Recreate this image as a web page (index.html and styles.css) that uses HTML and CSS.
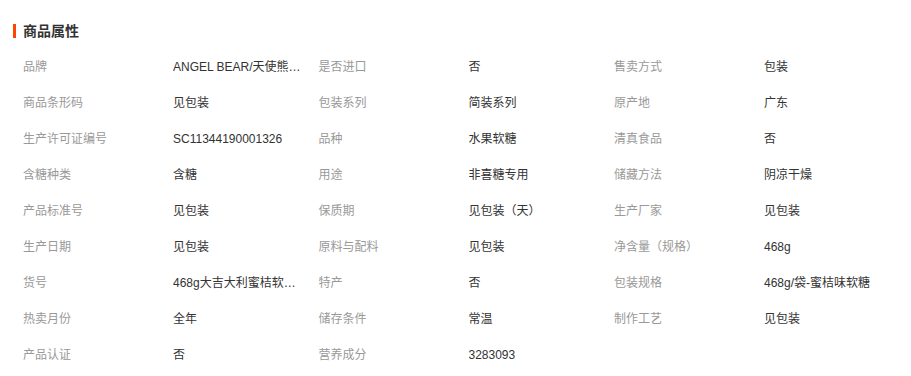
FILE: index.html
```html
<!DOCTYPE html>
<html lang="zh-CN">
<head>
<meta charset="utf-8">
<title>商品属性</title>
<link rel="stylesheet" href="styles.css">
</head>
<body>
<section class="attrs">
  <h2 class="attrs-title">商品属性</h2>
  <dl class="attrs-grid">
    <dt>品牌</dt><dd>ANGEL BEAR/天使熊食品</dd>
    <dt>是否进口</dt><dd>否</dd>
    <dt>售卖方式</dt><dd>包装</dd>

    <dt>商品条形码</dt><dd>见包装</dd>
    <dt>包装系列</dt><dd>简装系列</dd>
    <dt>原产地</dt><dd>广东</dd>

    <dt>生产许可证编号</dt><dd>SC11344190001326</dd>
    <dt>品种</dt><dd>水果软糖</dd>
    <dt>清真食品</dt><dd>否</dd>

    <dt>含糖种类</dt><dd>含糖</dd>
    <dt>用途</dt><dd>非喜糖专用</dd>
    <dt>储藏方法</dt><dd>阴凉干燥</dd>

    <dt>产品标准号</dt><dd>见包装</dd>
    <dt>保质期</dt><dd>见包装（天）</dd>
    <dt>生产厂家</dt><dd>见包装</dd>

    <dt>生产日期</dt><dd>见包装</dd>
    <dt>原料与配料</dt><dd>见包装</dd>
    <dt>净含量（规格）</dt><dd>468g</dd>

    <dt>货号</dt><dd>468g大吉大利蜜桔软糖年货喜糖</dd>
    <dt>特产</dt><dd>否</dd>
    <dt>包装规格</dt><dd>468g/袋-蜜桔味软糖</dd>

    <dt>热卖月份</dt><dd>全年</dd>
    <dt>储存条件</dt><dd>常温</dd>
    <dt>制作工艺</dt><dd>见包装</dd>

    <dt>产品认证</dt><dd>否</dd>
    <dt>营养成分</dt><dd>3283093</dd>
  </dl>
</section>
</body>
</html>
```
FILE: styles.css
```css
html, body {
  margin: 0;
  padding: 0;
  background: #fff;
}

body {
  font-family: "Liberation Sans", "Noto Sans CJK SC", sans-serif;
  font-size: 12px;
  color: #333;
}

.attrs {
  padding: 24px 13px 0 13px;
}

.attrs-title {
  margin: 0;
  height: 14px;
  line-height: 14px;
  padding-left: 7px;
  border-left: 3px solid #ff4400;
  font-size: 14px;
  font-weight: bold;
  color: #333;
}

.attrs-grid {
  margin: 11px 0 0 10px;
  display: grid;
  grid-template-columns: repeat(3, 150px 145.5px);
  grid-auto-rows: 36px;
  align-items: center;
}

.attrs-grid dt,
.attrs-grid dd {
  margin: 0;
  line-height: 16px;
  white-space: nowrap;
}

.attrs-grid dt {
  color: #999;
}

.attrs-grid dd {
  color: #333;
  max-width: 129px;
  overflow: hidden;
  text-overflow: ellipsis;
}
```
